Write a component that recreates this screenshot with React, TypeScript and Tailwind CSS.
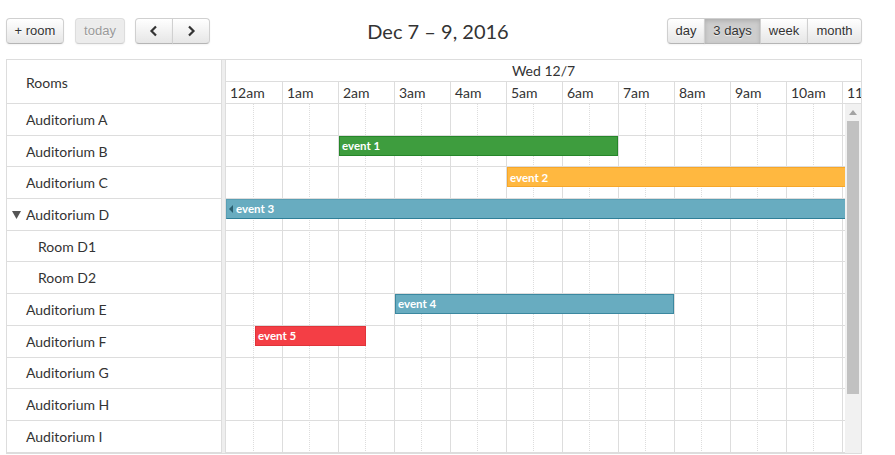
import React from "react";

const ROW_H = 31.7;

type Room = { name: string; indent: number; expander?: boolean };
const rooms: Room[] = [
  { name: "Auditorium A", indent: 0 },
  { name: "Auditorium B", indent: 0 },
  { name: "Auditorium C", indent: 0 },
  { name: "Auditorium D", indent: 0, expander: true },
  { name: "Room D1", indent: 1 },
  { name: "Room D2", indent: 1 },
  { name: "Auditorium E", indent: 0 },
  { name: "Auditorium F", indent: 0 },
  { name: "Auditorium G", indent: 0 },
  { name: "Auditorium H", indent: 0 },
  { name: "Auditorium I", indent: 0 },
];

const hours = [
  "12am", "1am", "2am", "3am", "4am", "5am", "6am", "7am", "8am", "9am", "10am", "11am",
];
const cols = Array.from({ length: 13 }, (_, i) => i);

type Ev = { title: string; row: number; start: number; end: number; cls: string; cont?: boolean };
const HW = 56;
const events: Ev[] = [
  { title: "event 1", row: 1, start: 2, end: 7, cls: "bg-[#3e9d3e] border-[#26862a]" },
  { title: "event 2", row: 2, start: 5, end: 14, cls: "bg-[#ffb840] border-[#f7a72a]" },
  { title: "event 3", row: 3, start: 0, end: 14, cls: "bg-[#68acc0] border-[#5a9fb4] border-b-[#2f7f98]", cont: true },
  { title: "event 4", row: 6, start: 3, end: 8, cls: "bg-[#68acc0] border-[#3b88a0]" },
  { title: "event 5", row: 7, start: 0.5, end: 2.5, cls: "bg-[#f43e45] border-[#e0343a]" },
];

const btnBase =
  "h-[26px] flex items-center justify-center text-[13px] font-['Liberation_Sans',Arial,sans-serif] border border-[#d0d0d0] border-b-[#b5b5b5] shadow-[inset_0_1px_0_rgba(255,255,255,0.2),0_1px_2px_rgba(0,0,0,0.05)] [text-shadow:0_1px_1px_rgba(255,255,255,0.75)]";
const btnNormal = "bg-[linear-gradient(#ffffff,#e6e6e6)] text-[#333]";

function Chevron({ dir }: { dir: "l" | "r" }) {
  return (
    <svg width="10" height="12" viewBox="0 0 10 12">
      {dir === "l" ? (
        <polyline points="7,1.5 2.5,6 7,10.5" fill="none" stroke="#333" strokeWidth="2.2" />
      ) : (
        <polyline points="3,1.5 7.5,6 3,10.5" fill="none" stroke="#333" strokeWidth="2.2" />
      )}
    </svg>
  );
}

export default function App() {
  return (
    <div className="w-[895px] h-[455px] overflow-hidden bg-white font-['Lato',sans-serif] text-[#333]">
      <div className="ml-[6px] w-[856px] pt-[18px]">
        {/* toolbar */}
        <div className="relative flex items-center justify-between h-[26px]">
          <div className="flex items-center">
            <button className={`${btnBase} ${btnNormal} w-[58px] rounded-[4px]`}>+ room</button>
            <button className={`${btnBase} ml-[11px] w-[50px] rounded-[4px] bg-[#ececec] text-[#9a9a9a] border-[#dddddd] border-b-[#cfcfcf]`}>
              today
            </button>
            <div className="ml-[10px] flex">
              <button className={`${btnBase} ${btnNormal} w-[38px] rounded-l-[4px]`}>
                <Chevron dir="l" />
              </button>
              <button className={`${btnBase} ${btnNormal} w-[38px] -ml-px rounded-r-[4px]`}>
                <Chevron dir="r" />
              </button>
            </div>
          </div>
          <div className="absolute left-[286px] w-[292px] text-center text-[20px] leading-[26px] text-[#333]">
            Dec 7 – 9, 2016
          </div>
          <div className="flex">
            <button className={`${btnBase} ${btnNormal} w-[38px] rounded-l-[4px]`}>day</button>
            <button className={`${btnBase} -ml-px w-[57px] bg-[#cdcdcd] text-[#333] shadow-[inset_0_2px_4px_rgba(0,0,0,0.15),0_1px_2px_rgba(0,0,0,0.05)]`}>
              3 days
            </button>
            <button className={`${btnBase} ${btnNormal} -ml-px w-[48px]`}>week</button>
            <button className={`${btnBase} ${btnNormal} -ml-px w-[55px] rounded-r-[4px]`}>month</button>
          </div>
        </div>

        {/* grid */}
        <div className="mt-[15px] flex border border-[#ddd] text-[14px]">
          {/* resource column */}
          <div className="w-[214px] shrink-0">
            <div className="h-[44px] border-b border-[#ddd] flex items-center pl-[19px] pt-[2px]">Rooms</div>
            {rooms.map((r) => (
              <div
                key={r.name}
                className="h-[31.7px] border-b border-[#ddd] flex items-center"
              >
                {r.expander ? (
                  <div className="flex items-center pl-[5px]">
                    <svg width="9" height="9" viewBox="0 0 9 9" className="mr-[5px] mt-[1px]">
                      <polygon points="0,1 9,1 4.5,9" fill="#555" />
                    </svg>
                    <span>{r.name}</span>
                  </div>
                ) : (
                  <span className={r.indent ? "pl-[31px]" : "pl-[19px]"}>{r.name}</span>
                )}
              </div>
            ))}
          </div>

          {/* divider */}
          <div className="w-[5px] shrink-0 bg-[#eee] border-x border-[#ddd]" />

          {/* timeline */}
          <div className="w-[635px] shrink-0">
            <div className="h-[44px] border-b border-[#ddd] overflow-hidden">
              <div className="h-[22px] border-b border-[#ddd] flex items-center justify-center">Wed 12/7</div>
              <div className="flex h-[21px] w-[672px]">
                {hours.map((h, i) => (
                  <div
                    key={h}
                    className={`w-[56px] shrink-0 flex items-center pl-[4px] ${i > 0 ? "border-l border-[#ddd]" : ""}`}
                  >
                    {h}
                  </div>
                ))}
              </div>
            </div>

            <div className="flex">
              {/* body */}
              <div className="relative w-[619px] overflow-hidden">
                {/* column lines */}
                <div className="absolute inset-0 flex w-[728px]">
                  {cols.map((i) => (
                    <div key={i} className={`w-[56px] h-full shrink-0 flex ${i > 0 ? "border-l border-[#ddd]" : ""}`}>
                      <div className={`${i > 0 ? "w-[27px]" : "w-[28px]"} h-full border-r border-dotted border-[#ddd]`} />
                    </div>
                  ))}
                </div>
                {/* rows */}
                <div className="relative">
                  {rooms.map((r) => (
                    <div key={r.name} className="h-[31.7px] border-b border-[#ddd]" />
                  ))}
                </div>
                {/* events */}
                {events.map((e) => (
                  <div
                    key={e.title}
                    className={`absolute h-[20px] border flex items-center text-white text-[11.5px] font-bold leading-none ${e.cls}`}
                    style={{
                      top: e.row * ROW_H,
                      left: e.start * HW + (e.start > 0 ? 1 : 0),
                      width: (e.end - e.start) * HW - (e.start > 0 ? 1 : 0),
                    }}
                  >
                    {e.cont ? (
                      <span className="ml-[2px] mr-[3px] w-0 h-0 border-y-[4px] border-y-transparent border-r-[4px] border-r-[#2b5f70]" />
                    ) : (
                      <span className="w-[2px]" />
                    )}
                    <span>{e.title}</span>
                  </div>
                ))}
              </div>

              {/* scrollbar */}
              <div className="w-[16px] shrink-0 bg-[#f1f1f1] flex flex-col items-center">
                <div className="h-[16px] flex items-center justify-center">
                  <svg width="8" height="5" viewBox="0 0 8 5">
                    <polygon points="0,5 8,5 4,0" fill="#a3a3a3" />
                  </svg>
                </div>
                <div className="mt-[1px] w-[12px] h-[273px] bg-[#c1c1c1]" />
              </div>
            </div>
          </div>
        </div>
      </div>
    </div>
  );
}
